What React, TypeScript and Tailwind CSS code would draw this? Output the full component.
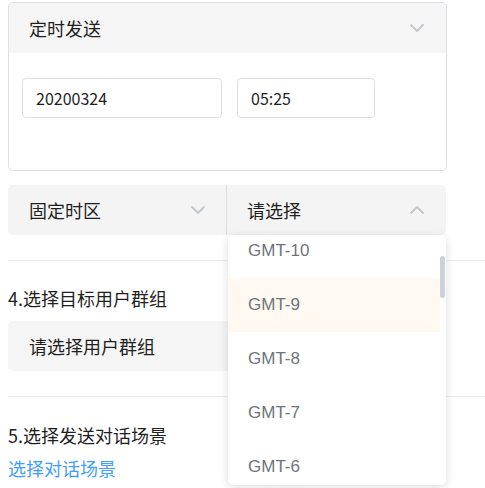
import React from 'react';

const cjk = { fontFamily: '"Microsoft YaHei", "Noto Sans CJK SC", "Noto Sans", sans-serif' };
const latin = { fontFamily: '"Liberation Sans", Arial, sans-serif' };

function Chevron({ up = false }: { up?: boolean }) {
  return (
    <svg width="16" height="10" viewBox="0 0 16 10" className="shrink-0">
      <polyline
        points={up ? '2,8 8,2 14,8' : '2,2 8,8 14,2'}
        fill="none"
        stroke="#c4c8cf"
        strokeWidth="2"
        strokeLinecap="round"
        strokeLinejoin="round"
      />
    </svg>
  );
}

const zones = ['GMT-10', 'GMT-9', 'GMT-8', 'GMT-7', 'GMT-6'];

export default function App() {
  return (
    <div className="relative w-[485px] h-[488px] overflow-hidden bg-white text-[#1f1f1f]" style={cjk}>
      <div className="pt-[2px] pl-2">
        {/* scheduled send card */}
        <div className="w-[439px] h-[169px] rounded-[5px] border border-[#dcdfe6]">
          <div className="h-[50px] bg-[#f5f5f5] rounded-t-[4px] flex items-center justify-between pl-5 pr-[21px] text-[18px] leading-6">
            <span>定时发送</span>
            <Chevron />
          </div>
          <div className="flex gap-[15px] pl-[13px] pt-[25px]">
            <div className="w-[200px] h-10 rounded-[4px] border border-[#dcdfe6] flex items-center pl-[13px] text-[16px]">20200324</div>
            <div className="w-[138px] h-10 rounded-[4px] border border-[#dcdfe6] flex items-center pl-[13px] text-[16px]">05:25</div>
          </div>
        </div>

        {/* timezone row */}
        <div className="mt-[14px] w-[438px] h-[50px] rounded-[5px] bg-[#f4f4f4] flex text-[18px] leading-6">
          <div className="w-[219px] flex items-center justify-between pl-[21px] pr-[20px] border-r border-[#dcdcdc]">
            <span>固定时区</span>
            <Chevron />
          </div>
          <div className="flex-1 flex items-center justify-between pl-[20px] pr-[21px]">
            <span>请选择</span>
            <Chevron up />
          </div>
        </div>
      </div>

      <div className="mt-[25px] ml-2 h-px bg-[#ebebeb]" />

      <div className="pl-2">
        <div className="mt-[25px] text-[18px] leading-6">4.选择目标用户群组</div>
        <div className="mt-[11px] w-[438px] h-[50px] rounded-[5px] bg-[#f5f5f5] flex items-center pl-[21px] text-[18px] leading-6">请选择用户群组</div>
      </div>

      <div className="mt-[25px] ml-2 h-px bg-[#ebebeb]" />

      <div className="pl-2">
        <div className="mt-[26px] text-[18px] leading-6">5.选择发送对话场景</div>
        <div className="mt-[9px] text-[18px] leading-6 text-[#409eff]">选择对话场景</div>
      </div>

      {/* open dropdown */}
      <div className="absolute left-[228px] top-[235px] w-[218px] h-[250px] bg-white rounded-[5px] shadow-[0_2px_10px_rgba(0,0,0,0.14)] overflow-hidden">
        <div className="-mt-[11px] pr-[6px]" style={latin}>
          {zones.map((z) => (
            <div
              key={z}
              className={`h-[54px] flex items-center pl-5 text-[17px] text-[#707479] ${z === 'GMT-9' ? 'bg-[#fff9f2]' : ''}`}
            >
              {z}
            </div>
          ))}
        </div>
        <div className="absolute right-[1px] top-[21px] w-[5px] h-[42px] rounded-full bg-[#cdd1d8]" />
      </div>
    </div>
  );
}
